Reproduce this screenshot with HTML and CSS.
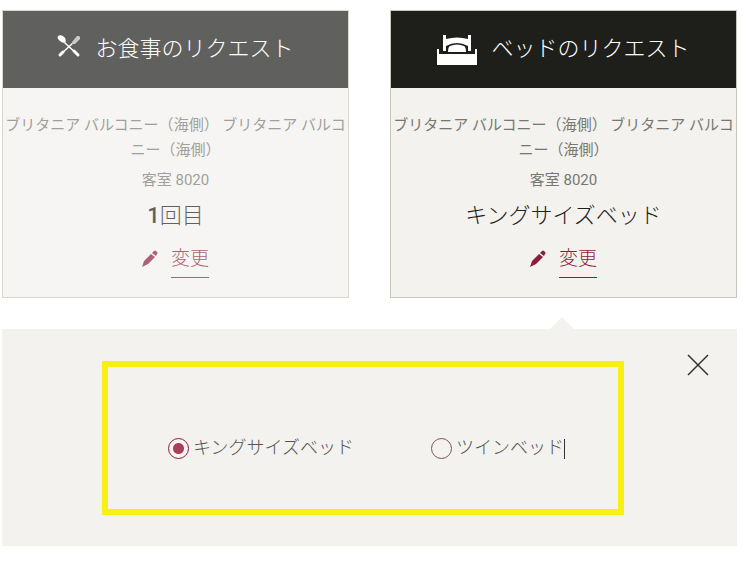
FILE: index.html
```
<!DOCTYPE html>
<html lang="ja">
<head>
  <meta charset="UTF-8" />
  <meta name="viewport" content="width=device-width, initial-scale=1.0" />
  <title>リクエスト</title>
  <link rel="stylesheet" href="styles.css">
</head>
<body>
  <main>
    <div class="cards">
      <section class="card inactive">
        <h2>
          <svg class="icon-meal" viewBox="0 0 24 24" aria-hidden="true">
            <path d="M8 9 L21 21" stroke="#fff" stroke-width="1.5" stroke-linecap="round" />
            <path d="M17 17 L21 21" stroke="#fff" stroke-width="3" stroke-linecap="round" />
            <path d="M1 2 C3 0 7 2 8 4 C9 6 9 8 8 9 C6 9 4 8 3 7 C1 5 0 4 1 2 Z" fill="#fff" />
            <path d="M17 8 L3 21" stroke="#fff" stroke-width="1.5" stroke-linecap="round" />
            <path d="M6 18 L3 21" stroke="#fff" stroke-width="3" stroke-linecap="round" />
            <path d="M15 8 L20 2 L22 2 L23 3 L23 5 L18 10 L15 10 Z" fill="#b4b4b2" />
          </svg>
          お食事のリクエスト
        </h2>
        <div class="card-body">
          <p class="room-type">ブリタニア バルコニー（海側） ブリタニア バルコニー（海側）</p>
          <p class="room">客室 8020</p>
          <p class="value"><b>1</b>回目</p>
          <div class="change">
            <svg class="icon-pencil" viewBox="0 0 16 18" aria-hidden="true">
              <path d="M0 17 L2 11 L9 4 L13 7 L6 14 Z M10 3 L12 1 Q13 0 14 1 L15 2 Q16 3 15 4 L14 6 Z" />
            </svg>
            <a href="#">変更</a>
          </div>
        </div>
      </section>

      <section class="card">
        <h2>
          <svg class="icon-bed" viewBox="0 0 40 30" aria-hidden="true">
            <path d="M0 14 H2 V19 H38 V14 H40 V30 H0 Z" />
            <path d="M6 0 H9 V4 Q20 1 31 4 V0 H34 V16 H31 V11 Q20 5 9 11 V16 H6 Z" />
            <path d="M11 17 Q11 12 13 11 Q20 8 27 11 Q29 12 29 17 Z" />
          </svg>
          ベッドのリクエスト
        </h2>
        <div class="card-body">
          <p class="room-type">ブリタニア バルコニー（海側） ブリタニア バルコニー（海側）</p>
          <p class="room">客室 8020</p>
          <p class="value">キングサイズベッド</p>
          <div class="change">
            <svg class="icon-pencil" viewBox="0 0 16 18" aria-hidden="true">
              <path d="M0 17 L2 11 L9 4 L13 7 L6 14 Z M10 3 L12 1 Q13 0 14 1 L15 2 Q16 3 15 4 L14 6 Z" />
            </svg>
            <a href="#">変更</a>
          </div>
        </div>
      </section>
    </div>

    <form class="panel">
      <div class="options">
        <div class="option">
          <input type="radio" name="bed" id="king" checked />
          <label for="king">キングサイズベッド</label>
        </div>
        <div class="option">
          <input type="radio" name="bed" id="twin" />
          <label for="twin" class="caret">ツインベッド</label>
        </div>
      </div>
      <button type="button" class="close" aria-label="閉じる">
        <svg viewBox="0 0 22 22" aria-hidden="true">
          <path d="M1 1 L21 21 M21 1 L1 21" />
        </svg>
      </button>
    </form>
  </main>
</body>
</html>
```
FILE: styles.css
```
* {
  box-sizing: border-box;
}

body {
  margin: 0;
  background-color: #fff;
  font-family: Roboto, "Noto Sans CJK JP", sans-serif;
  color: #1e1f1b;
}

main {
  padding: 10px 13px 16px 2px;
}

.cards {
  display: grid;
  grid-template-columns: 1fr 1fr;
  gap: 41px;
}

.card {
  background-color: #f3f2ee;
  border: 1px solid #c6c7b9;
  text-align: center;
}

.card.inactive {
  opacity: 0.7;
}

.card h2 {
  display: flex;
  justify-content: center;
  align-items: center;
  gap: 14px;
  height: 77px;
  margin: 0;
  padding-bottom: 8px;
  background-color: #1e1f1b;
  color: #fff;
  font-size: 22px;
  font-weight: 300;
}

.icon-meal {
  width: 24px;
  height: 24px;
  fill: none;
}

.icon-bed {
  width: 40px;
  height: 30px;
  margin-top: 8px;
  fill: #fff;
}

.card-body {
  padding: 25px 0 19px;
}

.card p {
  margin: 0;
}

.room-type,
.room {
  color: #777772;
  font-size: 15px;
  line-height: 25px;
}

.card .room {
  margin: 5px 0 8px;
}

.value {
  font-size: 22px;
  font-weight: 300;
  line-height: 30px;
}

.value b {
  font-weight: 500;
}

.change {
  display: flex;
  justify-content: center;
  align-items: center;
  gap: 13px;
  margin-top: 9px;
}

.icon-pencil {
  width: 16px;
  height: 18px;
  fill: #8c1d3a;
}

.change a {
  border-bottom: 1px solid #8c1d3a;
  color: #8c1d3a;
  font-size: 19px;
  font-weight: 300;
  line-height: 37px;
  text-decoration: none;
}

.panel {
  position: relative;
  display: flex;
  align-items: flex-start;
  gap: 63px;
  margin-top: 31px;
  padding: 25px 28px 31px 100px;
  background-color: #f3f2ee;
}

/* pointer up to the open card */
.panel::before {
  content: "";
  position: absolute;
  right: 163px;
  bottom: 100%;
  border: 12px solid transparent;
  border-top: 0;
  border-bottom-color: #f3f2ee;
}

.options {
  flex: 1;
  display: flex;
  flex-wrap: wrap;
  gap: 24px 77px;
  margin-top: 7px;
  padding: 68px 40px 48px 60px;
  border: 6px solid #f8f015;
}

.option {
  display: flex;
  align-items: center;
  gap: 4px;
  color: #555551;
  font-size: 18px;
  font-weight: 300;
  line-height: 26px;
}

.option input {
  appearance: none;
  width: 21px;
  height: 21px;
  margin: 0;
  border: 1px solid #7d5060;
  border-radius: 50%;
}

.option input:checked {
  border-color: #8c1d3a;
  background: radial-gradient(circle, #a8405a 5px, #fdf3f5 6px);
}

.caret::after {
  content: "";
  display: inline-block;
  height: 20px;
  border-right: 1px solid #333;
  vertical-align: middle;
}

.close {
  width: 22px;
  height: 22px;
  padding: 0;
  border: 0;
  background: none;
  cursor: pointer;
}

.close svg {
  display: block;
  stroke: #333;
  stroke-width: 1.5;
}
```
